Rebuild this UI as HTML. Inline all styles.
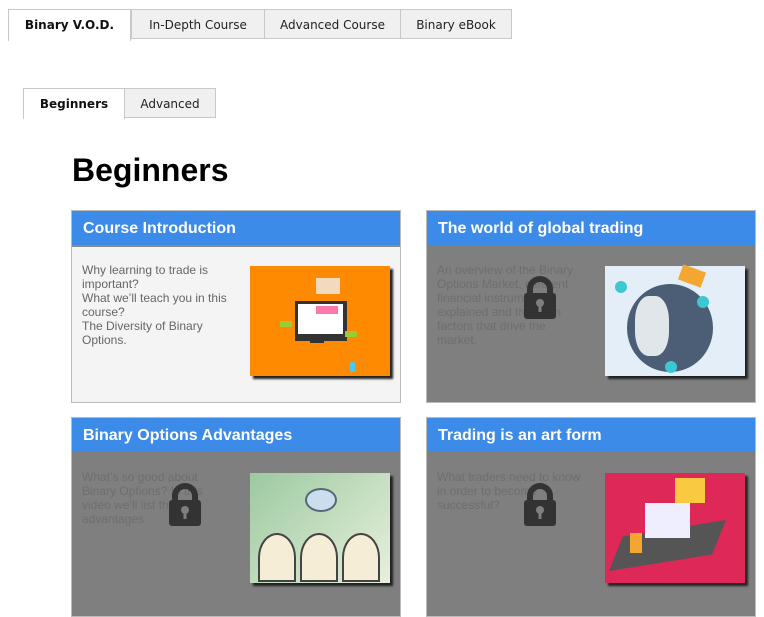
<!DOCTYPE html>
<html><head><style>
body{margin:0;width:764px;height:611px;overflow:hidden;background:#fff;font-family:"Liberation Sans",Arial,sans-serif;position:relative}
.tab{position:absolute;height:30px;line-height:30px;text-align:center;font-family:"DejaVu Sans",Verdana,sans-serif;font-size:12px;color:#222;background:#f0f0f0;border:1px solid #c8c8c8;box-sizing:border-box}
.tab.a{background:#fff;font-weight:bold;border-bottom:none;color:#111}
h1{position:absolute;left:72px;top:152px;margin:0;font-size:32px;font-weight:bold;color:#000}
.card{position:absolute;width:330px;border:1px solid #bbb;box-sizing:border-box;background:#f4f4f4;overflow:hidden}
.hd{height:34px;background:#3d8be8;border-bottom:2px solid #8a8a8a;color:#fff;font-weight:bold;font-size:16px;line-height:35px;padding-left:11px}
.tx{position:absolute;left:10px;top:52px;width:148px;font-size:12px;line-height:14px;color:#666}
.lk .body{background:#7f7f7f;position:absolute;left:0;right:0;top:36px;bottom:0}
.lk .hd{border-bottom-color:#7f7f7f}
.lk .tx{color:#6e6e6e}
.img{position:absolute;left:178px;top:55px;width:140px;height:110px;box-shadow:3px 3px 2px #222}
.lock{position:absolute;left:96px}
</style></head><body>
<div class="tab a" style="left:8px;top:9px;width:123px;height:32px">Binary V.O.D.</div>
<div class="tab" style="left:131px;top:9px;width:134px">In-Depth Course</div>
<div class="tab" style="left:264px;top:9px;width:137px">Advanced Course</div>
<div class="tab" style="left:400px;top:9px;width:112px">Binary eBook</div>
<div class="tab a" style="left:23px;top:88px;width:102px;height:31px">Beginners</div>
<div class="tab" style="left:124px;top:88px;width:92px">Advanced</div>
<h1>Beginners</h1>

<div class="card" style="left:71px;top:210px;height:193px">
<div class="hd">Course Introduction</div>
<div class="tx">Why learning to trade is important?<br>What we’ll teach you in this course?<br>The Diversity of Binary Options.</div>
<div class="img" style="background:#fd8a00">
<div style="position:absolute;left:45px;top:35px;width:48px;height:36px;background:#333;border:2px solid #333"></div>
<div style="position:absolute;left:48px;top:38px;width:45px;height:30px;background:#fff"></div>
<div style="position:absolute;left:66px;top:40px;width:22px;height:8px;background:#f7a"></div>
<div style="position:absolute;left:60px;top:74px;width:14px;height:3px;background:#333"></div>
<div style="position:absolute;left:66px;top:12px;width:24px;height:16px;background:#eee;opacity:.8"></div>
<div style="position:absolute;left:100px;top:96px;width:5px;height:10px;background:#4cf;border-radius:2px"></div>
<div style="position:absolute;left:30px;top:55px;width:12px;height:6px;background:#9c3"></div>
<div style="position:absolute;left:95px;top:65px;width:12px;height:6px;background:#9c3"></div>
</div>
</div>

<div class="card lk" style="left:426px;top:210px;height:193px">
<div class="hd">The world of global trading</div>
<div class="body"></div>
<div class="tx">An overview of the Binary Options Market, different financial instruments explained and the main factors that drive the market.</div>
<div class="img" style="background:#e3eef8">
<div style="position:absolute;left:22px;top:18px;width:86px;height:88px;border-radius:50%;background:#4b5e75"></div>
<div style="position:absolute;left:30px;top:30px;width:34px;height:60px;border-radius:40%;background:#f2f5f8;opacity:.9"></div>
<div style="position:absolute;left:75px;top:2px;width:24px;height:16px;background:#f4a630;transform:rotate(20deg)"></div>
<div style="position:absolute;left:10px;top:15px;width:12px;height:12px;border-radius:50%;background:#3cc8d0"></div>
<div style="position:absolute;left:92px;top:30px;width:12px;height:12px;border-radius:50%;background:#3cc8d0"></div>
<div style="position:absolute;left:60px;top:95px;width:12px;height:12px;border-radius:50%;background:#3cc8d0"></div>
</div>
<svg class="lock" style="top:64px" width="34" height="45" viewBox="0 0 34 45"><path d="M7 20V14a10 10 0 0 1 20 0v6" fill="none" stroke="#333" stroke-width="6"/><rect x="1" y="18" width="32" height="26" rx="3" fill="#333"/><circle cx="17" cy="28" r="4" fill="#7f7f7f"/><rect x="15.5" y="29" width="3" height="8" fill="#7f7f7f"/></svg>
</div>

<div class="card lk" style="left:71px;top:417px;height:200px">
<div class="hd">Binary Options Advantages</div>
<div class="body"></div>
<div class="tx">What’s so good about Binary Options? In this video we’ll list the advantages</div>
<div class="img" style="background:linear-gradient(135deg,#9cc9a0,#e8f0dc)">
<div style="position:absolute;left:55px;top:15px;width:28px;height:20px;border-radius:50%;border:2px solid #567;background:#cde"></div>
<div style="position:absolute;left:8px;top:60px;width:34px;height:45px;border-radius:50% 50% 0 0;border:2px solid #444;background:#f5edd5"></div>
<div style="position:absolute;left:50px;top:60px;width:34px;height:45px;border-radius:50% 50% 0 0;border:2px solid #444;background:#f5edd5"></div>
<div style="position:absolute;left:92px;top:60px;width:34px;height:45px;border-radius:50% 50% 0 0;border:2px solid #444;background:#f5edd5"></div>
</div>
<svg class="lock" style="top:64px" width="34" height="45" viewBox="0 0 34 45"><path d="M7 20V14a10 10 0 0 1 20 0v6" fill="none" stroke="#333" stroke-width="6"/><rect x="1" y="18" width="32" height="26" rx="3" fill="#333"/><circle cx="17" cy="28" r="4" fill="#7f7f7f"/><rect x="15.5" y="29" width="3" height="8" fill="#7f7f7f"/></svg>
</div>

<div class="card lk" style="left:426px;top:417px;height:200px">
<div class="hd">Trading is an art form</div>
<div class="body"></div>
<div class="tx">What traders need to know in order to become successful?</div>
<div class="img" style="background:#de2858">
<div style="position:absolute;left:15px;top:55px;width:95px;height:35px;background:#555;transform:skewX(-30deg) rotate(-10deg)"></div>
<div style="position:absolute;left:40px;top:30px;width:45px;height:35px;background:#eef"></div>
<div style="position:absolute;left:70px;top:5px;width:30px;height:25px;background:#f9c940"></div>
<div style="position:absolute;left:25px;top:60px;width:12px;height:20px;background:#f4a630"></div>
</div>
<svg class="lock" style="top:64px" width="34" height="45" viewBox="0 0 34 45"><path d="M7 20V14a10 10 0 0 1 20 0v6" fill="none" stroke="#333" stroke-width="6"/><rect x="1" y="18" width="32" height="26" rx="3" fill="#333"/><circle cx="17" cy="28" r="4" fill="#7f7f7f"/><rect x="15.5" y="29" width="3" height="8" fill="#7f7f7f"/></svg>
</div>
</body></html>
